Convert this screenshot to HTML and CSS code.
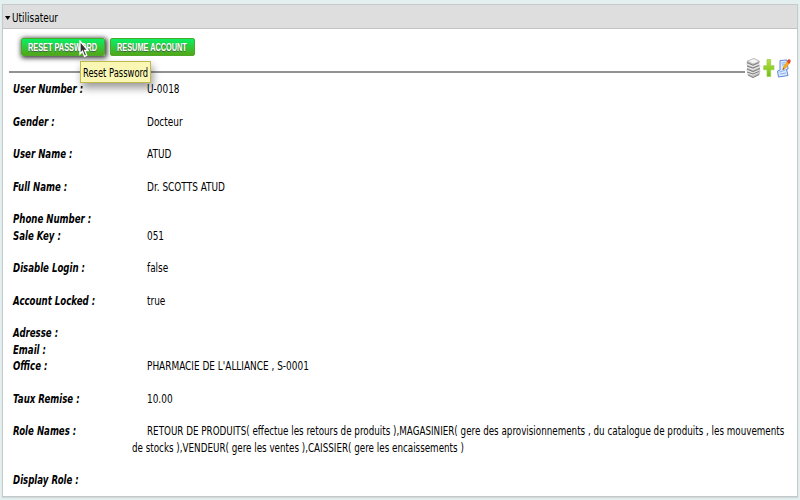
FILE: index.html
```html
<!DOCTYPE html>
<html lang="fr">
<head>
<meta charset="utf-8">
<title>Utilisateur</title>
<link rel="stylesheet" href="styles.css">
</head>
<body>
<main class="panel">
  <header class="panel-head"><svg class="caret" viewBox="0 0 6 4"><path d="M0 0h5.4L2.700 4z"/></svg><span class="text">Utilisateur</span></header>
  <div class="actions">
    <button class="btn btn-hover"><span class="btn-text">RESET PASSWORD</span></button>
    <button class="btn btn-resume"><span class="btn-text">RESUME ACCOUNT</span></button>
  </div>
  <div class="toolbar">
    <div class="rule"></div>
    <svg class="icon papers" viewBox="0 0 15 20">
      <path d="M1 3 8 0l6 3-1 3 1.500 2-1 3 1 2-1 4-6.500 3-5.500-3V14L.5 12l1-3-1-3z" fill="#c4c4c4"/>
      <path d="M1.500 3 8 .5l5.500 3L7 6z" fill="#f4f4f4" stroke="#aaa" stroke-width=".6"/>
      <path d="m1 6 6 2.500L13 6M1.500 9.500l5.500 2 7-3M1 12.500l6 2.500 6-3M2 15l5 2 6-3" fill="none" stroke="#eee" stroke-width=".9"/>
      <path d="m1 4.500 6 2.700 6-2.700M1 8l6 2 6-2.500M1 11l6 2.500 7-3M1 14l6 2 6-2.500M2 17l5 2.500 6-3" fill="none" stroke="#777" stroke-width=".9"/>
    </svg>
    <svg class="icon plus" viewBox="0 0 12 20">
      <defs><linearGradient id="g" x2="0" y2="1"><stop stop-color="#b5e03f"/><stop offset="1" stop-color="#72be18"/></linearGradient></defs>
      <path d="M4 1.500h3.700v6.200H11v4H7.700V18.500H4v-6.800H.7v-4H4z" fill="url(#g)" stroke="#9dce50" stroke-width=".8" stroke-linejoin="round"/>
    </svg>
    <svg class="icon edit" viewBox="0 0 14 20">
      <path d="m3 2.500 7-.5 1 9-1.500.5 1.500 6-9.500 1.500L.5 13l2.500-1z" fill="#dce9fb" stroke="#5d87df" stroke-width="1" stroke-linejoin="round"/>
      <path d="m4.500 5 4-.3M5 7l3-.3M2.500 14l6-2M3 16l6-1" stroke="#83a8ed" stroke-width=".9"/>
      <path d="m5.500 12 .7-3.500 4.600-6 2.500 2.200-5 6z" fill="#f6aa23"/>
      <path d="m9.800 3.500 1.400-2q1.300-.8 2.300.6.500 1-.2 2.100L12 6z" fill="#e2482d"/>
      <path d="m5.500 12 .6-2.500 1.500 1.500z" fill="#765"/>
    </svg>
  </div>
  <dl class="fields">
    <dt><span>User Number :</span></dt><dd><span class="text">U-0018</span></dd>
    <dt><span>Gender :</span></dt><dd><span class="text">Docteur</span></dd>
    <dt><span>User Name :</span></dt><dd><span class="text">ATUD</span></dd>
    <dt><span>Full Name :</span></dt><dd><span class="text">Dr. SCOTTS ATUD</span></dd>
    <dt><span>Phone Number :</span></dt><dd class="empty"></dd>
    <dt><span>Sale Key :</span></dt><dd><span class="text">051</span></dd>
    <dt><span>Disable Login :</span></dt><dd><span class="text">false</span></dd>
    <dt><span>Account Locked :</span></dt><dd><span class="text">true</span></dd>
    <dt><span>Adresse :</span></dt><dd class="empty"></dd>
    <dt><span>Email :</span></dt><dd class="empty"></dd>
    <dt><span>Office :</span></dt><dd><span class="text">PHARMACIE DE L'ALLIANCE , S-0001</span></dd>
    <dt><span>Taux Remise :</span></dt><dd><span class="text">10.00</span></dd>
    <dt><span>Role Names :</span></dt><dd><span class="text roles">RETOUR DE PRODUITS( effectue les retours de produits ),MAGASINIER( gere des aprovisionnements , du catalogue de produits , les mouvements</span><br><span class="text roles outdent">de stocks ),VENDEUR( gere les ventes ),CAISSIER( gere les encaissements )</span></dd>
    <dt><span>Display Role :</span></dt><dd class="empty"></dd>
  </dl>
</main>
<div class="tooltip"><span class="text">Reset Password</span></div>
<svg class="cursor" viewBox="0 0 10 18"><path d="M1 1v13l2.500-2.700 2 5 2.200-1-2-4.800H9z" fill="#333" stroke="#fff" stroke-width="1.300"/></svg>
</body>
</html>
```
FILE: styles.css
```css
* { box-sizing: border-box; }
body {
  margin: 0;
  height: 500px;
  padding: 4px 2px 3px;
  overflow: hidden;
  background: #e4f0f0;
  color: #000;
  font: 12.5px/16.3px "DejaVu Sans", sans-serif;
}
.panel {
  height: 493px;
  background: #fff;
  border: 1px solid #c5c9c9;
  box-shadow: 0 1px 1px #d0d8d8;
}
.panel-head {
  display: flex;
  align-items: center;
  height: 24px;
  padding: 3px 0 0 2px;
  background: #dedede;
  border-bottom: 1px solid #c2c2c2;
}
.caret { width: 6px; height: 4px; margin-right: 1px; }
.text, .btn-text, dt span {
  display: inline-block;
  white-space: nowrap;
  transform-origin: 0 50%;
}
.text { transform: scaleX(.715); }
.text.roles { transform: scaleX(.7015); }
dt span { transform: scaleX(.688); }
.actions {
  display: flex;
  gap: 5px;
  height: 28px;
  padding: 9px 0 0 18px;
}
.btn {
  width: 84px;
  height: 18px;
  padding: 0 0 0 6px;
  border: 1px solid #4da82a;
  border-radius: 2px;
  background: linear-gradient(#06f163, #54a616);
  color: #fff;
  font: bold 11px/17px "Liberation Sans", sans-serif;
  text-align: left;
  text-shadow: 0 1px 1px #4a5a4a;
  overflow: visible;
}
.btn-hover { box-shadow: 1px 1px 5px 1px #333; }
.btn-resume { width: 85px; }
.btn-text { transform: scaleX(.667); }
.toolbar {
  display: flex;
  align-items: center;
  height: 21px;
  padding: 0 6px;
}
.rule { flex: 1; height: 2px; margin-top: 9px; background: #929292; }
.icon { height: 20px; }
.papers { width: 15px; margin-left: 1px; }
.plus { width: 12px; margin-left: 2px; }
.edit { width: 14px; margin-left: 2px; }
.fields {
  display: grid;
  grid-template-columns: 134.5px 1fr;
  margin: 3px 0 0 9.5px;
}
dt { font-weight: bold; font-style: italic; }
dd { margin: 0; padding-bottom: 16.3px; min-width: 0; }
dd .text { height: 16.3px; width: 0; vertical-align: top; }
.empty { padding: 0; height: 16.3px; }
.outdent { margin-left: -15px; }
.tooltip {
  position: absolute;
  left: 80px;
  top: 61px;
  width: 71px;
  height: 22px;
  padding: 3px 2px;
  background: #faf7b4;
  border: 1px solid #bdb94d;
  box-shadow: 2px 5px 8px rgba(0,0,0,.4);
}
.tooltip .text { transform: scaleX(.67); }
.cursor { position: absolute; left: 79px; top: 40px; width: 10px; height: 18px; }
```
